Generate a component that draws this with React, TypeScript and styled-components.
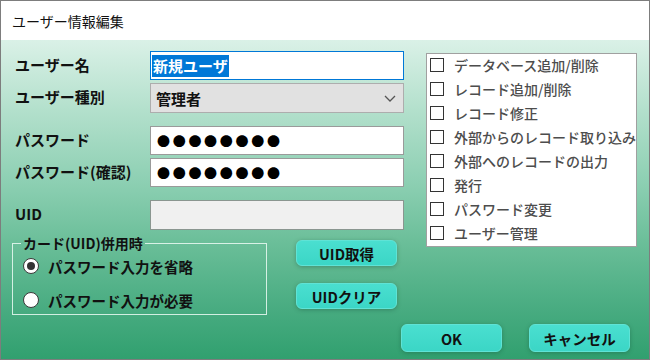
import React from "react";
import styled, { createGlobalStyle } from "styled-components";

const font = `"Noto Sans CJK JP", "Noto Sans", sans-serif`;

const GlobalStyle = createGlobalStyle`
  html, body {
    margin: 0;
    padding: 0;
    background: #ffffff;
  }
  * {
    box-sizing: border-box;
  }
`;

const Window = styled.div`
  width: 650px;
  height: 360px;
  border: 1px solid #7d7d7d;
  display: flex;
  flex-direction: column;
  font-family: ${font};
  overflow: hidden;
`;

const TitleBar = styled.div`
  height: 39px;
  flex: none;
  display: flex;
  align-items: center;
  padding-left: 11px;
  background: #ffffff;
  font-size: 14px;
  color: #111;
`;

const Body = styled.div`
  flex: 1;
  display: flex;
  flex-direction: column;
  padding: 11px 19px 7px 11px;
  background: linear-gradient(
    180deg,
    #daf1e7 0%,
    #b3e0cc 22%,
    #8ccfb2 45%,
    #68bd97 65%,
    #47ab80 85%,
    #31a06f 100%
  );
`;

const Top = styled.div`
  display: flex;
  gap: 22px;
`;

const LeftColumn = styled.div`
  width: 392px;
  display: flex;
  flex-direction: column;
`;

const FieldRow = styled.div<{ $gap?: number }>`
  display: flex;
  align-items: center;
  margin-top: ${(p) => p.$gap ?? 0}px;
`;

const Label = styled.div`
  width: 138px;
  padding-left: 3px;
  margin-top: -3px;
  font-size: 15px;
  font-weight: 700;
  color: #111;
  white-space: nowrap;
`;

const InputBox = styled.div<{ $focus?: boolean; $disabled?: boolean; $h?: number }>`
  width: 254px;
  height: ${(p) => p.$h ?? 29}px;
  display: flex;
  align-items: center;
  padding-left: 1px;
  border: 1px solid ${(p) => (p.$focus ? "#0078d7" : p.$disabled ? "#8a9690" : "#9a9a9a")};
  background: ${(p) => (p.$disabled ? "#f0f0f0" : "#ffffff")};
  font-size: 15px;
  font-weight: 700;
  color: #111;
`;

const Selection = styled.span`
  display: inline-block;
  line-height: 22px;
  padding: 0 1px;
  background: #0078d7;
  color: #ffffff;
`;

const Combo = styled.div`
  width: 254px;
  height: 30px;
  display: flex;
  align-items: center;
  justify-content: space-between;
  padding: 0 7px 0 5px;
  border: 1px solid #adadad;
  background: #e1e1e1;
  font-size: 15px;
  font-weight: 700;
  color: #111;
`;

const Dots = styled.span`
  padding-left: 5px;
  font-size: 13px;
  letter-spacing: 2.7px;
  color: #000;
`;

const Bottom = styled.div`
  display: flex;
  align-items: flex-start;
  gap: 29px;
  margin-top: 5px;
`;

const GroupBox = styled.fieldset`
  margin: 0;
  width: 255px;
  padding: 3px 0 2px 10px;
  border: 1px solid rgba(235, 250, 243, 0.85);
  display: flex;
  flex-direction: column;
  gap: 10px;
`;

const Legend = styled.legend`
  padding: 0 2px;
  margin-left: -2px;
  line-height: 16px;
  font-size: 14px;
  font-weight: 700;
  color: #111;
`;

const RadioRow = styled.label`
  height: 24px;
  display: flex;
  align-items: center;
  gap: 9px;
  font-size: 14.5px;
  font-weight: 700;
  color: #111;
`;

const RadioCircle = styled.span<{ $checked?: boolean }>`
  width: 16px;
  height: 16px;
  border-radius: 50%;
  border: 1px solid #3a3a3a;
  background: #ffffff;
  display: flex;
  align-items: center;
  justify-content: center;
  &::after {
    content: "";
    width: 8px;
    height: 8px;
    border-radius: 50%;
    background: ${(p) => (p.$checked ? "#333333" : "transparent")};
  }
`;

const ButtonColumn = styled.div`
  display: flex;
  flex-direction: column;
  gap: 17px;
  margin-top: 5px;
`;

const Button = styled.button<{ $h?: number }>`
  width: 101px;
  height: ${(p) => p.$h ?? 26}px;
  padding: 0;
  border: 1px solid #5fe3d6;
  border-radius: 6px;
  background: linear-gradient(180deg, #4adfd0 0%, #3bd6c6 100%);
  box-shadow: 0 1px 4px rgba(20, 70, 50, 0.35);
  font-family: ${font};
  font-size: 14.5px;
  font-weight: 700;
  color: #111;
`;

const PermList = styled.ul`
  list-style: none;
  margin: 2px 0 0;
  padding: 0 0 0 3px;
  width: 212px;
  height: 194px;
  background: #ffffff;
  border: 1px solid #a0a0a0;
`;

const PermItem = styled.li`
  height: 24px;
  display: flex;
  align-items: center;
  gap: 10px;
  margin-top: -1px;
  margin-bottom: 1px;
  font-size: 14px;
  font-weight: 500;
  color: #4d4d4d;
  white-space: nowrap;
`;

const CheckBox = styled.span`
  width: 14px;
  height: 14px;
  flex: none;
  border: 1px solid #333333;
  background: #ffffff;
`;

const Footer = styled.div`
  margin-top: auto;
  display: flex;
  justify-content: flex-end;
  gap: 27px;
`;

const permissions = [
  "データベース追加/削除",
  "レコード追加/削除",
  "レコード修正",
  "外部からのレコード取り込み",
  "外部へのレコードの出力",
  "発行",
  "パスワード変更",
  "ユーザー管理",
];

function Chevron() {
  return (
    <svg width="12" height="7" viewBox="0 0 12 7">
      <path d="M1 1 L6 6 L11 1" fill="none" stroke="#555" strokeWidth="1.3" />
    </svg>
  );
}

export default function App() {
  return (
    <>
      <GlobalStyle />
      <Window>
        <TitleBar>ユーザー情報編集</TitleBar>
        <Body>
          <Top>
            <LeftColumn>
              <FieldRow>
                <Label>ユーザー名</Label>
                <InputBox $focus>
                  <Selection>新規ユーザ</Selection>
                </InputBox>
              </FieldRow>
              <FieldRow $gap={3}>
                <Label>ユーザー種別</Label>
                <Combo>
                  <span>管理者</span>
                  <Chevron />
                </Combo>
              </FieldRow>
              <FieldRow $gap={13}>
                <Label>パスワード</Label>
                <InputBox>
                  <Dots>●●●●●●●●</Dots>
                </InputBox>
              </FieldRow>
              <FieldRow $gap={3}>
                <Label>パスワード(確認)</Label>
                <InputBox>
                  <Dots>●●●●●●●●</Dots>
                </InputBox>
              </FieldRow>
              <FieldRow $gap={13}>
                <Label>UID</Label>
                <InputBox $disabled $h={30} />
              </FieldRow>
              <Bottom>
                <GroupBox>
                  <Legend>カード(UID)併用時</Legend>
                  <RadioRow>
                    <RadioCircle $checked />
                    パスワード入力を省略
                  </RadioRow>
                  <RadioRow>
                    <RadioCircle />
                    パスワード入力が必要
                  </RadioRow>
                </GroupBox>
                <ButtonColumn>
                  <Button>UID取得</Button>
                  <Button>UIDクリア</Button>
                </ButtonColumn>
              </Bottom>
            </LeftColumn>
            <PermList>
              {permissions.map((p) => (
                <PermItem key={p}>
                  <CheckBox />
                  {p}
                </PermItem>
              ))}
            </PermList>
          </Top>
          <Footer>
            <Button $h={28}>OK</Button>
            <Button $h={28}>キャンセル</Button>
          </Footer>
        </Body>
      </Window>
    </>
  );
}
